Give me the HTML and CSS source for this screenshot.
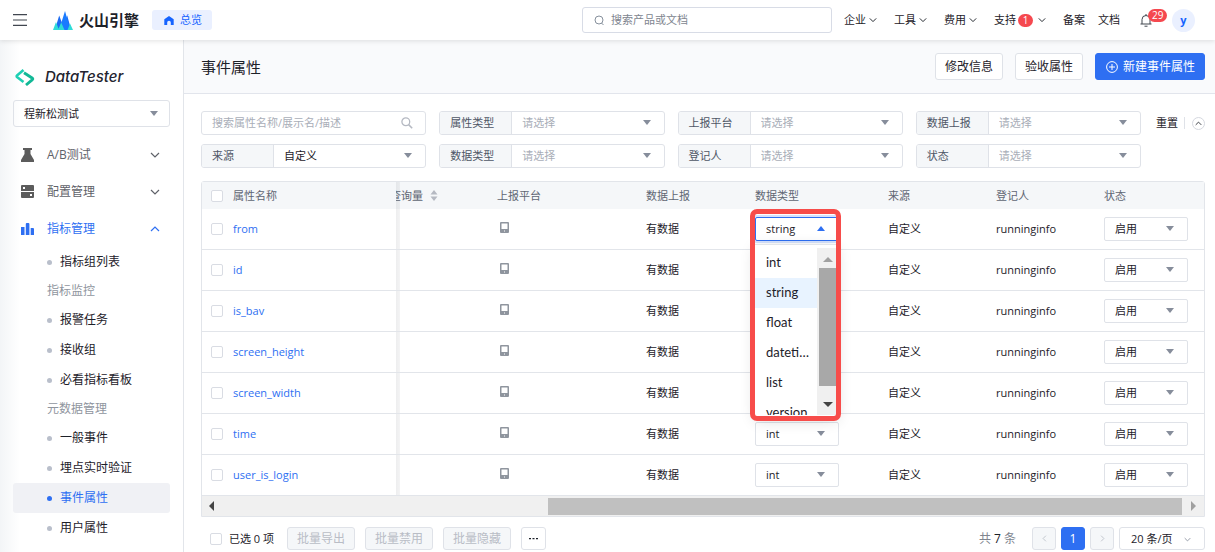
FILE: index.html
```html
<!DOCTYPE html>
<html lang="zh-CN">
<head>
<meta charset="utf-8">
<meta name="viewport" content="width=device-width, initial-scale=1">
<title>事件属性 - DataTester</title>
<link rel="stylesheet" href="styles.css">
</head>
<body>
<svg class="defs" aria-hidden="true">
  <symbol id="chev" viewBox="0 0 10 6"><path d="M1 1l4 4 4-4" fill="none" stroke="currentColor" stroke-width="1.2"/></symbol>
  <symbol id="phone" viewBox="0 0 9 11"><path fill="#8f959e" fill-rule="evenodd" d="M1 0h7a1 1 0 0 1 1 1v9a1 1 0 0 1-1 1H1a1 1 0 0 1-1-1V1a1 1 0 0 1 1-1zm.5 1.500v5.500h6V1.500zM4 8.500v1h1v-1z"/></symbol>
</svg>

<header class="topbar">
  <button class="icon-btn burger" aria-label="菜单"><svg width="14" height="12" viewBox="0 0 14 12"><path d="M0 .6h14M0 6h14M0 11.400h14" stroke="#41464f" stroke-width="1.200"/></svg></button>
  <a class="brand" href="#">
    <svg width="20" height="19" viewBox="0 0 20 19">
      <path fill="#1d6cf2" d="M1.800 19L6.200 4.500 9 12v7zM11 19V12l3.200-7.500L18.200 19z"/>
      <path fill="#1a7bff" d="M6 19L12 0l4 14-1 5z"/>
      <path fill="#2fdcd7" d="M0 19l3-8 3 8zM5 19l3.200-7.500L11.500 19zM14.500 19L17 12.500 20 19z"/>
    </svg>
    <span>火山引擎</span>
  </a>
  <a class="overview" href="#">
    <svg width="10" height="9" viewBox="0 0 10 9"><path fill="#1664ff" d="M5 0l4.700 3.300V9H6.800V6.500a1.800 1.800 0 0 0-3.600 0V9H.3V3.300z"/></svg>
    总览
  </a>
  <label class="search">
    <svg width="11" height="11" viewBox="0 0 11 11"><circle cx="5" cy="5" r="4" fill="none" stroke="#86909c"/><path d="M7.500 8l2 2" stroke="#86909c"/></svg>
    <input type="text" placeholder="搜索产品或文档" aria-label="搜索产品或文档">
  </label>
  <nav class="topnav">
    <a href="#">企业<svg class="chev"><use href="#chev"/></svg></a>
    <a href="#">工具<svg class="chev"><use href="#chev"/></svg></a>
    <a href="#">费用<svg class="chev"><use href="#chev"/></svg></a>
    <a href="#">支持<span class="badge">1</span><svg class="chev"><use href="#chev"/></svg></a>
    <a class="tight" href="#">备案</a>
    <a class="tight" href="#">文档</a>
  </nav>
  <button class="icon-btn bell" aria-label="通知">
    <svg width="12" height="13" viewBox="0 0 12 13"><path d="M.5 10h11M2 10V5.500a4 4 0 0 1 8 0V10M6 0v1.500M4.500 12.200h3" fill="none" stroke="#41464f"/></svg>
    <span class="badge count">29</span>
  </button>
  <button class="avatar">y</button>
</header>

<div class="shell">
  <aside class="sidebar">
    <div class="product">
      <svg width="20" height="17" viewBox="0 0 20 17">
        <path d="M8.500 1L2 6.500a1 1 0 0 0 0 1.500l6.500 5" fill="none" stroke="#1fd0b4" stroke-width="2.600"/>
        <path d="M9 3.800l8.400 5.400a1 1 0 0 1 0 1.400L11 16" fill="none" stroke="#12b896" stroke-width="2.800"/>
      </svg>
      <span>DataTester</span>
    </div>
    <div class="pick project"><select aria-label="项目"><option>程新松测试</option></select></div>
    <nav class="menu">
      <a class="top" href="#"><svg width="13" height="14" viewBox="0 0 13 14"><path fill="#5c5c5c" d="M2 0h9v2H9.500v4L13 12v2H0v-2l3.500-6V2H2z"/></svg><span>A/B测试</span><svg class="chev"><use href="#chev"/></svg></a>
      <a class="top" href="#"><svg width="13" height="13" viewBox="0 0 13 13"><path fill="#5c5c5c" fill-rule="evenodd" d="M1 0h11a1 1 0 0 1 1 1v5H0V1a1 1 0 0 1 1-1zm1 2v2h2V2zM0 7h13v5a1 1 0 0 1-1 1H1a1 1 0 0 1-1-1zm9 2v2h2V9z"/></svg><span>配置管理</span><svg class="chev"><use href="#chev"/></svg></a>
      <a class="top open" href="#"><svg width="13" height="12" viewBox="0 0 13 12"><path fill="#2e6ff2" d="M0 4h3.500v8H0zM4.800 1a1 1 0 0 1 1-1h1.600a1 1 0 0 1 1 1v11H4.800zM9.700 5H12a1 1 0 0 1 1 1v6H9.700z"/></svg><span>指标管理</span><svg class="chev up"><use href="#chev"/></svg></a>
      <a class="sub" href="#">指标组列表</a>
      <p class="group">指标监控</p>
      <a class="sub" href="#">报警任务</a>
      <a class="sub" href="#">接收组</a>
      <a class="sub" href="#">必看指标看板</a>
      <p class="group">元数据管理</p>
      <a class="sub" href="#">一般事件</a>
      <a class="sub" href="#">埋点实时验证</a>
      <a class="sub active" href="#">事件属性</a>
      <a class="sub" href="#">用户属性</a>
    </nav>
  </aside>

  <main class="main">
    <div class="pagehead">
      <h1>事件属性</h1>
      <button class="btn">修改信息</button>
      <button class="btn">验收属性</button>
      <button class="btn primary"><svg width="12" height="12" viewBox="0 0 12 12"><circle cx="6" cy="6" r="5.400" fill="none" stroke="#fff"/><path d="M6 3v6M3 6h6" stroke="#fff"/></svg>新建事件属性</button>
    </div>

    <div class="content">
      <form class="filterbar">
        <div class="filters">
          <label class="field find"><input type="text" placeholder="搜索属性名称/展示名/描述" aria-label="搜索属性"><svg width="12" height="12" viewBox="0 0 12 12"><circle cx="4.800" cy="4.800" r="3.900" fill="none" stroke="#b5b9c2" stroke-width="1.300"/><path d="M7.600 7.600l3.600 3.600" stroke="#b5b9c2" stroke-width="1.500"/></svg></label>
          <div class="field"><label for="f1">属性类型</label><div class="pick empty"><select id="f1"><option>请选择</option></select></div></div>
          <div class="field"><label for="f2">上报平台</label><div class="pick empty"><select id="f2"><option>请选择</option></select></div></div>
          <div class="field"><label for="f3">数据上报</label><div class="pick empty"><select id="f3"><option>请选择</option></select></div></div>
          <div class="field"><label for="f4">来源</label><div class="pick"><select id="f4"><option>自定义</option></select></div></div>
          <div class="field"><label for="f5">数据类型</label><div class="pick empty"><select id="f5"><option>请选择</option></select></div></div>
          <div class="field"><label for="f6">登记人</label><div class="pick empty"><select id="f6"><option>请选择</option></select></div></div>
          <div class="field"><label for="f7">状态</label><div class="pick empty"><select id="f7"><option>请选择</option></select></div></div>
        </div>
        <div class="reset">
          <button type="reset" class="link">重置</button>
          <button type="button" class="fold" aria-label="收起"><svg class="mini up"><use href="#chev"/></svg></button>
        </div>
      </form>

      <div class="tablebox">
        <table>
          <colgroup><col class="c1"><col class="c2"><col class="c3"><col class="c4"><col class="c5"><col class="c6"><col class="c7"><col class="c8"></colgroup>
          <thead>
            <tr>
              <th><label class="tick"><input type="checkbox">属性名称</label></th>
              <th class="edge"><div class="cut"><span>查询量</span><svg width="8" height="11" viewBox="0 0 8 11"><path fill="#b5b9c2" d="M4 0l3.500 4.500h-7zM4 11l3.500-4.500h-7z"/></svg></div></th>
              <th>上报平台</th><th>数据上报</th><th>数据类型</th><th>来源</th><th>登记人</th><th>状态</th>
            </tr>
          </thead>
          <tbody>
            <tr>
              <td><div class="tick"><input type="checkbox" aria-label="from"><a href="#">from</a></div></td><td class="edge"></td><td><svg class="phone"><use href="#phone"/></svg></td><td>有数据</td>
              <td>
                <div class="typebox">
                  <div class="pick cell focus"><select aria-label="数据类型"><option>string</option></select></div>
                  <div class="dropdown">
                    <ul role="listbox" aria-label="数据类型">
                      <li role="option">int</li>
                      <li role="option" class="on" aria-selected="true">string</li>
                      <li role="option">float</li>
                      <li role="option">datetime</li>
                      <li role="option">list</li>
                      <li role="option">version</li>
                    </ul>
                    <div class="vbar"><i class="arrow n"></i><i class="thumb"></i><i class="arrow s"></i></div>
                  </div>
                  <div class="frame"></div>
                </div>
              </td>
              <td>自定义</td><td>runninginfo</td><td><div class="pick cell"><select aria-label="状态"><option>启用</option></select></div></td>
            </tr>
            <tr><td><div class="tick"><input type="checkbox" aria-label="id"><a href="#">id</a></div></td><td class="edge"></td><td><svg class="phone"><use href="#phone"/></svg></td><td>有数据</td><td><div class="pick cell"><select aria-label="数据类型"><option>string</option></select></div></td><td>自定义</td><td>runninginfo</td><td><div class="pick cell"><select aria-label="状态"><option>启用</option></select></div></td></tr>
            <tr><td><div class="tick"><input type="checkbox" aria-label="is_bav"><a href="#">is_bav</a></div></td><td class="edge"></td><td><svg class="phone"><use href="#phone"/></svg></td><td>有数据</td><td><div class="pick cell"><select aria-label="数据类型"><option>int</option></select></div></td><td>自定义</td><td>runninginfo</td><td><div class="pick cell"><select aria-label="状态"><option>启用</option></select></div></td></tr>
            <tr><td><div class="tick"><input type="checkbox" aria-label="screen_height"><a href="#">screen_height</a></div></td><td class="edge"></td><td><svg class="phone"><use href="#phone"/></svg></td><td>有数据</td><td><div class="pick cell"><select aria-label="数据类型"><option>int</option></select></div></td><td>自定义</td><td>runninginfo</td><td><div class="pick cell"><select aria-label="状态"><option>启用</option></select></div></td></tr>
            <tr><td><div class="tick"><input type="checkbox" aria-label="screen_width"><a href="#">screen_width</a></div></td><td class="edge"></td><td><svg class="phone"><use href="#phone"/></svg></td><td>有数据</td><td><div class="pick cell"><select aria-label="数据类型"><option>int</option></select></div></td><td>自定义</td><td>runninginfo</td><td><div class="pick cell"><select aria-label="状态"><option>启用</option></select></div></td></tr>
            <tr><td><div class="tick"><input type="checkbox" aria-label="time"><a href="#">time</a></div></td><td class="edge"></td><td><svg class="phone"><use href="#phone"/></svg></td><td>有数据</td><td><div class="pick cell"><select aria-label="数据类型"><option>int</option></select></div></td><td>自定义</td><td>runninginfo</td><td><div class="pick cell"><select aria-label="状态"><option>启用</option></select></div></td></tr>
            <tr><td><div class="tick"><input type="checkbox" aria-label="user_is_login"><a href="#">user_is_login</a></div></td><td class="edge"></td><td><svg class="phone"><use href="#phone"/></svg></td><td>有数据</td><td><div class="pick cell"><select aria-label="数据类型"><option>int</option></select></div></td><td>自定义</td><td>runninginfo</td><td><div class="pick cell"><select aria-label="状态"><option>启用</option></select></div></td></tr>
          </tbody>
        </table>
        <div class="hbar"><i class="arrow w"></i><div class="track"><i class="thumb"></i></div><i class="arrow e"></i></div>
      </div>

      <div class="tablefoot">
        <label class="tick"><input type="checkbox">已选 0 项</label>
        <div class="batch">
          <button class="btn small" disabled>批量导出</button>
          <button class="btn small" disabled>批量禁用</button>
          <button class="btn small" disabled>批量隐藏</button>
          <button class="btn small more" aria-label="更多"><svg width="9" height="2" viewBox="0 0 9 2"><path fill="#1d2129" d="M0 0h2v1.200H0zM3.500 0h2v1.200h-2zM7 0h2v1.200H7z"/></svg></button>
        </div>
        <div class="pager">
          <span class="total">共 <b>7</b> 条</span>
          <button class="page off" disabled aria-label="上一页"><svg class="mini left"><use href="#chev"/></svg></button>
          <button class="page current">1</button>
          <button class="page off" disabled aria-label="下一页"><svg class="mini right"><use href="#chev"/></svg></button>
          <div class="size"><select aria-label="每页条数"><option>20 条/页</option></select><svg class="mini"><use href="#chev"/></svg></div>
        </div>
      </div>
    </div>
  </main>
</div>
</body>
</html>
```
FILE: styles.css
```css
* { box-sizing: border-box; }
body {
  margin: 0;
  height: 100vh;
  display: flex;
  flex-direction: column;
  overflow: hidden;
  background: #fff;
  color: #1d2129;
  font: 11px/16px "Open Sans", "Noto Sans CJK SC", sans-serif;
}
button, input, select { font: inherit; color: inherit; margin: 0; }
button { padding: 0; border: 0; background: none; }
a { color: inherit; text-decoration: none; }
svg { display: block; flex: none; }
.defs { position: absolute; width: 0; height: 0; }
.chev { width: 10px; height: 6px; }
.mini { width: 7px; height: 5px; }
.up { transform: rotate(180deg); }
.left { transform: rotate(90deg); }
.right { transform: rotate(-90deg); }

/* top bar */
.topbar {
  position: relative;
  z-index: 2;
  flex: none;
  height: 40px;
  padding: 0 20px 0 13px;
  display: flex;
  align-items: center;
  background: #fff;
  box-shadow: 0 1px 5px rgba(0, 0, 0, .12);
}
.burger { margin-right: 26px; }
.brand { display: flex; align-items: center; gap: 6px; font-size: 15px; font-weight: 700; line-height: 20px; }
.overview {
  margin-left: 13px;
  padding: 2px 10px 2px 12px;
  display: flex;
  align-items: center;
  gap: 6px;
  border-radius: 3px;
  background: #eaf0ff;
  color: #1664ff;
}
.search {
  width: 250px;
  height: 26px;
  margin-left: auto;
  padding: 0 11px;
  display: flex;
  align-items: center;
  gap: 6px;
  border: 1px solid #d8dce6;
  border-radius: 3px;
}
.search input, .find input { flex: 1; min-width: 0; padding: 0; border: 0; outline: 0; background: none; }
.search input::placeholder { color: #80858f; }
.topnav { margin-left: 12px; display: flex; gap: 17px; }
.topnav a { display: flex; align-items: center; gap: 3px; }
.topnav .tight + .tight { margin-left: -4px; }
.topnav .chev { width: 8px; }
.badge {
  min-width: 15px;
  height: 13px;
  padding: 0 4px;
  border-radius: 7px;
  background: #f5484f;
  color: #fff;
  font-size: 10px;
  line-height: 13px;
  text-align: center;
}
.topnav .badge { margin: 0 2px 0 -1px; }
.bell { position: relative; margin-left: 20px; }
.count { position: absolute; left: 8px; top: -5px; }
.avatar {
  width: 23px;
  height: 23px;
  margin-left: 20px;
  border-radius: 50%;
  background: #eaf0ff;
  color: #1664ff;
  font-weight: 700;
}

.shell { flex: 1; min-height: 0; display: flex; }

/* sidebar */
.sidebar {
  flex: none;
  width: 184px;
  padding: 25px 13px 0;
  overflow: hidden;
  border-right: 1px solid #e2e5ea;
  background: linear-gradient(90deg, #f3f5f7, #fff 20px);
}
.product { height: 24px; display: flex; align-items: center; gap: 10px; padding-left: 2px; color: #23242f; font: italic 500 15px/24px Inter, sans-serif; }
.project { height: 27px; margin: 11px 0 9px; border: 1px solid #dfe2e8; border-radius: 3px; }
.menu { font-size: 12px; }
.top { height: 37px; padding: 0 10px 0 8px; display: flex; align-items: center; color: #5f6269; }
.top span { flex: 1; margin-left: 13px; }
.top.open { color: #2e6ff2; }
.group { height: 28px; margin: 0; padding-left: 34px; line-height: 28px; color: #8f959e; }
.sub { height: 30px; padding-left: 34px; display: flex; align-items: center; gap: 8px; border-radius: 3px; }
.sub::before { content: ""; width: 5px; height: 5px; border-radius: 50%; background: #b9bfcb; }
.active { background: #f0f1f5; color: #2e6ff2; }
.active::before { background: #2e6ff2; }

/* page heading */
.main { flex: 1; min-width: 0; }
.pagehead {
  height: 54px;
  padding: 0 10px 0 17px;
  display: flex;
  align-items: center;
  gap: 12px;
  background: #f9fafc;
  border-bottom: 1px solid #e2e5ec;
}
.pagehead h1 { flex: 1; margin: 0; font-size: 15px; line-height: 20px; font-weight: 400; }
.btn {
  height: 27px;
  padding: 0 9px;
  display: flex;
  align-items: center;
  gap: 5px;
  border: 1px solid #dfe2e8;
  border-radius: 3px;
  background: #fff;
  font-size: 12px;
}
.btn.primary { padding: 0 9px 0 10px; border-color: #2e6ff2; background: #2e6ff2; color: #fff; }

.content { padding: 17px 10px 0 17px; }

/* selects */
.pick { position: relative; display: flex; }
.pick select {
  width: 100%;
  height: 100%;
  padding: 0 24px 0 10px;
  border: 0;
  outline: 0;
  background: none;
  appearance: none;
}
.pick::after {
  content: "";
  position: absolute;
  right: 11px;
  top: 50%;
  margin-top: -3px;
  border: solid transparent;
  border-width: 5px 4px 0;
  border-top-color: #868d9b;
  pointer-events: none;
}
.pick.empty { color: #a9aeb8; }
.pick.cell { width: 84px; height: 24px; border: 1px solid #dfe2e8; border-radius: 2px; background: #fff; }
.pick.cell::after { right: 13px; }
.pick.focus { border-color: #2e6ff2; box-shadow: 0 0 0 2px #d5e2fd; }
.pick.focus::after { border-width: 0 4px 5px; border-bottom-color: #2e6ff2; }

/* filters */
.filterbar { display: flex; align-items: flex-start; }
.filters { flex: 1; display: grid; grid-template-columns: repeat(4, 1fr); gap: 9px 13px; }
.field { height: 24px; display: flex; border: 1px solid #dfe2e8; border-radius: 3px; overflow: hidden; }
.field > label { width: 72px; padding-left: 10px; line-height: 21px; border-right: 1px solid #dfe2e8; background: #f5f7f9; color: #4e5666; }
.field .pick { flex: 1; }
.field .pick::after { right: 13px; }
.find { padding: 0 12px 0 10px; align-items: center; }
.find input::placeholder { color: #a9aeb8; }
.reset { height: 24px; margin-left: 15px; display: flex; align-items: center; gap: 7px; }
.link { padding-right: 6px; border-right: 1px solid #dfe2e8; line-height: 12px; }
.fold { width: 13px; height: 13px; display: grid; place-items: center; border: 1px solid #d5d8df; border-radius: 50%; }

/* table */
.tablebox { margin-top: 13px; border: 1px solid #e2e5ea; border-radius: 3px 3px 0 0; }
table { width: 100%; table-layout: fixed; border-collapse: separate; border-spacing: 0; }
.c1 { width: 194px; }
.c2 { width: 91px; }
.c3 { width: 149px; }
.c4 { width: 109px; }
.c5 { width: 133px; }
.c6 { width: 108px; }
.c7 { width: 108px; }
.c8 { width: 110px; }
th, td { padding: 0 0 0 10px; text-align: left; font-weight: 400; white-space: nowrap; }
th:first-child, td:first-child { padding-left: 9px; }
th { height: 27px; background: #f5f7f9; color: #5f6673; }
td { height: 41px; border-bottom: 1px solid #e2e5ea; }
tr:last-child td { height: 40px; border-bottom: 0; }
td a { color: #2e6ff2; }
th.edge, td.edge { padding: 0; }
.edge { background-image: linear-gradient(90deg, rgba(30, 35, 50, .08), rgba(30, 35, 50, .05)); background-size: 4px 100%; background-repeat: no-repeat; }
.cut { width: 42px; display: flex; justify-content: flex-end; align-items: center; gap: 7px; overflow: hidden; }
.cut span { flex: none; }
.tick { display: flex; align-items: center; gap: 10px; }
.tick input { appearance: none; width: 12px; height: 12px; border: 1px solid #d9dce3; border-radius: 2px; background: #fff; }
.phone { width: 9px; height: 11px; margin: 0 0 3px 3px; }

/* open type list */
.typebox { position: relative; }
.dropdown {
  position: absolute;
  z-index: 1;
  left: 0;
  top: 27px;
  width: 82px;
  height: 172px;
  padding: 3px 0 1px;
  display: flex;
  background: #fff;
  border-top: 1px solid #e2e5ea;
  box-shadow: 0 4px 14px rgba(0, 0, 0, .16);
  font: 13px/29px Lato, sans-serif;
}
.dropdown ul { flex: 1; min-width: 0; margin: 0; padding: 0; overflow: hidden; list-style: none; }
.dropdown li { height: 30px; padding: 0 8px 0 11px; overflow: hidden; text-overflow: ellipsis; }
.dropdown .on { background: #e8f3ff; }
.vbar { width: 20px; padding: 9px 0 8px 2px; display: flex; flex-direction: column; align-items: center; gap: 6px; background: #f0f0f0; }
.vbar .thumb { flex: 1; width: 100%; margin-bottom: 10px; background: #a8a8a8; }
.frame { position: absolute; z-index: 2; left: -5px; top: -8px; width: 91px; height: 212px; border: 5px solid #f74c4a; border-radius: 7px; pointer-events: none; }
.arrow { border: 5px solid transparent; }
.n { border-top: 0; border-bottom-color: #a0a0a0; }
.s { border-bottom: 0; border-top-color: #444; }
.w { border-left: 0; border-right-color: #444; }
.e { border-right: 0; border-left-color: #a0a0a0; }

.hbar { height: 21px; padding: 0 8px 0 7px; display: flex; align-items: center; background: #f0f0f0; border-top: 1px solid #e2e5ea; }
.track { flex: 1; margin: 0 9px 0 8px; display: flex; justify-content: flex-end; }
.track .thumb { width: 66%; height: 17px; background: #c0c0c0; }

/* table footer */
.tablefoot { margin-top: 10px; padding-left: 9px; display: flex; align-items: center; }
.tablefoot .tick { gap: 7px; }
.batch { margin-left: 13px; display: flex; gap: 10px; }
.small { height: 23px; }
.small:disabled { background: #f5f7f9; color: #b9bdc6; }
.more { padding: 0 7px; }
.pager { margin-left: auto; display: flex; align-items: center; gap: 5px; font-size: 12px; }
.total { margin-right: 11px; color: #80858f; }
.total b { font-weight: 400; color: #1d2129; }
.page { width: 24px; height: 23px; display: grid; place-items: center; border: 1px solid #dfe2e8; border-radius: 3px; }
.off { background: #f5f7f9; color: #b9bdc6; }
.current { border-color: #2e6ff2; background: #2e6ff2; color: #fff; }
.size { position: relative; width: 86px; height: 23px; border: 1px solid #dfe2e8; border-radius: 3px; font-size: 11px; }
.size select { width: 100%; height: 100%; padding: 0 24px 0 11px; border: 0; background: none; appearance: none; }
.size .mini { position: absolute; right: 13px; top: 9px; color: #868d9b; pointer-events: none; }
```
